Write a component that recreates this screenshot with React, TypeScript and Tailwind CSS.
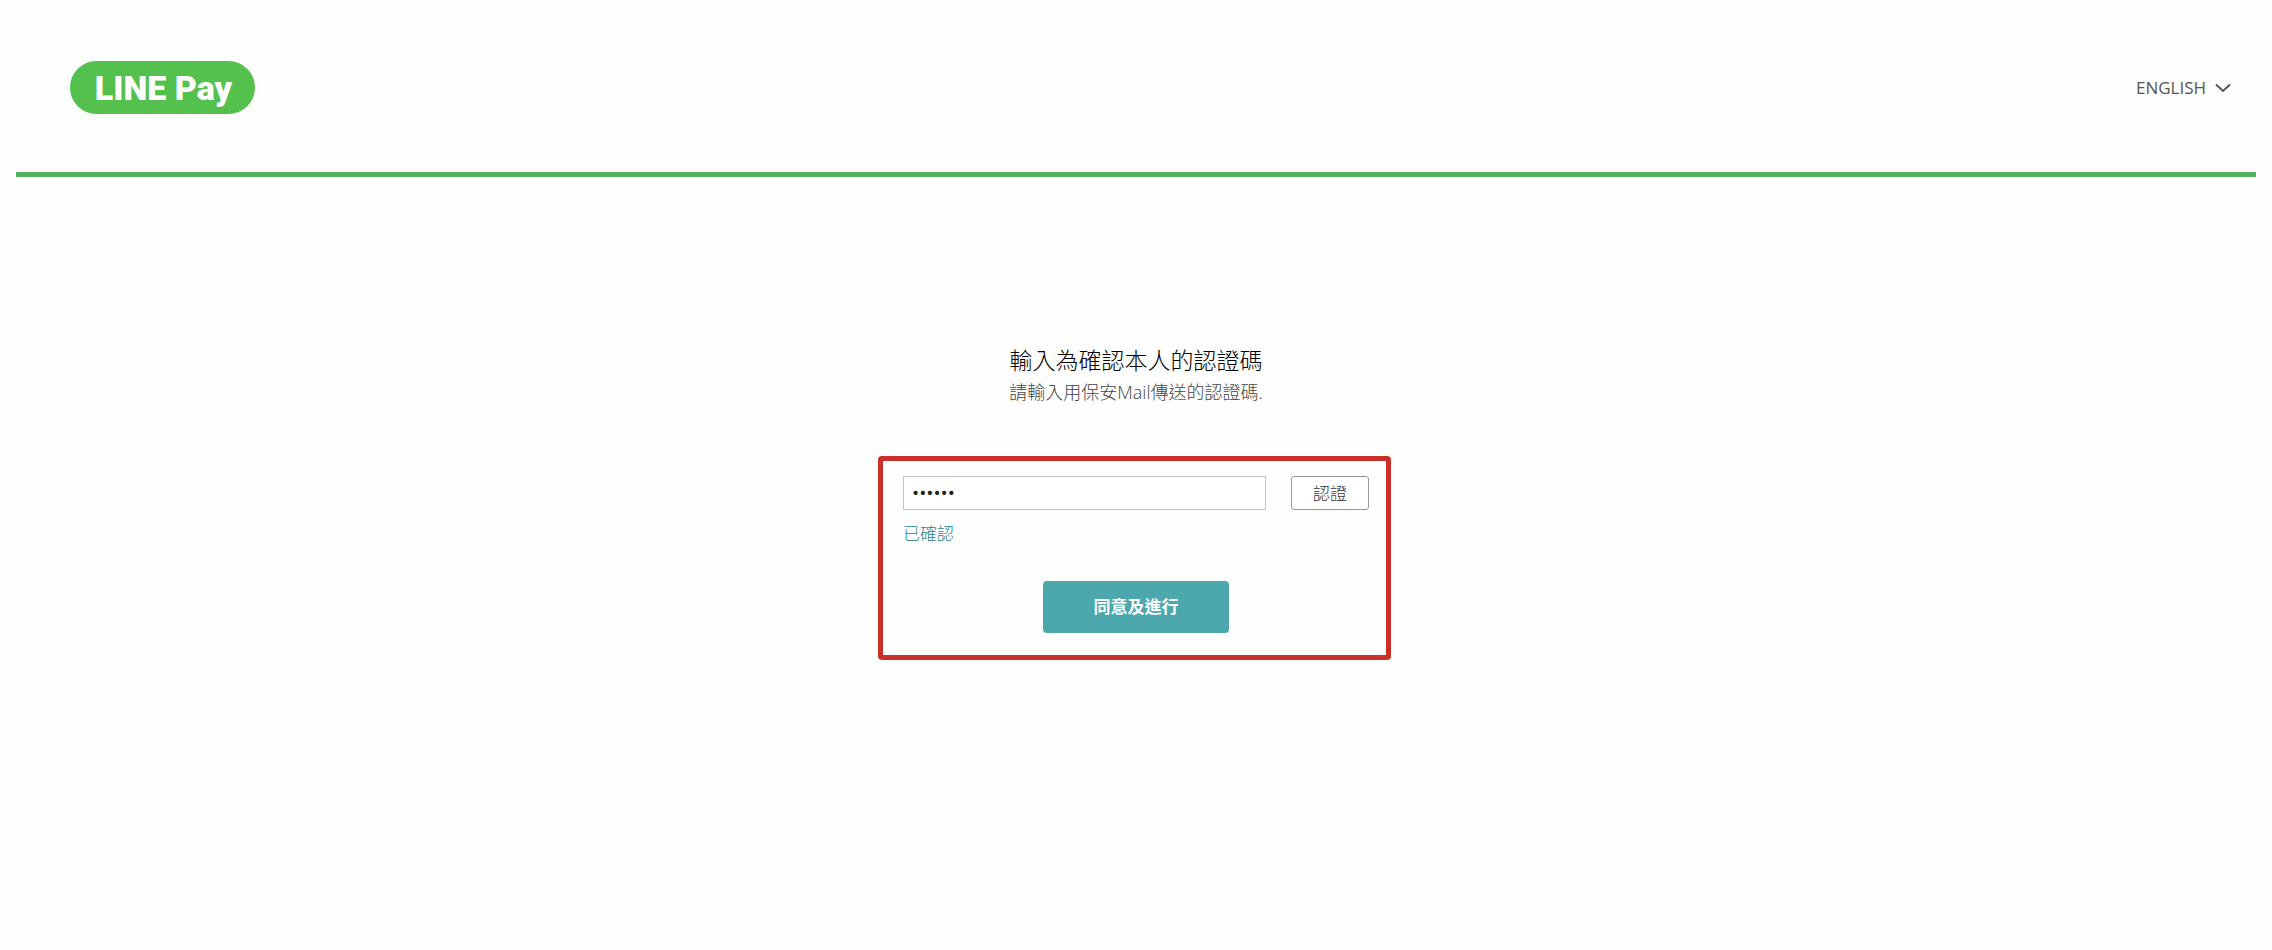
import { useState } from "react";

const LANGUAGES = ["ENGLISH"];

function Logo() {
  return (
    <a
      href="#"
      aria-label="LINE Pay"
      className="flex h-[53px] w-[185px] items-center justify-center rounded-full bg-[#54c04e] pt-px pl-[2px] font-['Roboto',sans-serif] text-[34px] leading-none font-black text-white"
    >
      LINE Pay
    </a>
  );
}

function LanguageSelect() {
  return (
    <div className="relative flex items-center text-[#555]">
      <select
        aria-label="Language"
        className="appearance-none bg-transparent pr-6 text-[17px] leading-6 outline-none"
      >
        {LANGUAGES.map((language) => (
          <option key={language}>{language}</option>
        ))}
      </select>
      <svg
        className="pointer-events-none absolute right-0 h-[10px] w-4"
        viewBox="0 0 16 10"
        fill="none"
        stroke="currentColor"
        strokeWidth="2"
        aria-hidden="true"
      >
        <path d="M1 1.5 8 8l7-6.5" />
      </svg>
    </div>
  );
}

export default function App() {
  const [code, setCode] = useState("000000");

  return (
    <div className="min-h-screen bg-[#fefefe] px-4 font-['Open_Sans','Noto_Sans_CJK_TC',sans-serif]">
      <header className="flex items-center justify-between border-b-[5px] border-[#53b060] pt-[61px] pr-[25px] pb-[58px] pl-[54px]">
        <Logo />
        <LanguageSelect />
      </header>

      <main className="flex flex-col items-center pt-[167px]">
        <h1 className="text-[23px] leading-8 font-light text-black">輸入為確認本人的認證碼</h1>
        <p className="text-[18px] leading-8 font-light text-[#444]">請輸入用保安Mail傳送的認證碼.</p>

        <form
          className="relative mt-[68px] flex w-full max-w-[466px] flex-col"
          onSubmit={(e) => e.preventDefault()}
        >
          <div className="pointer-events-none absolute -top-5 -right-[22px] -bottom-[27px] -left-[25px] rounded-sm border-[5px] border-[#c93029]" />

          <div className="flex gap-[25px]">
            <input
              type="password"
              aria-label="認證碼"
              value={code}
              onChange={(e) => setCode(e.target.value)}
              className="h-[34px] min-w-0 flex-1 border border-[#c4c4c4] bg-white px-2 text-[19px] text-[#222] outline-none"
            />
            <button
              type="button"
              className="h-[34px] w-[78px] rounded-[3px] border border-[#999] bg-white text-[17px] leading-none font-light text-[#333]"
            >
              認證
            </button>
          </div>
          <p className="mt-3 text-[17px] leading-6 font-light text-[#1f8488]">已確認</p>

          <button
            type="submit"
            className="mt-[35px] h-[52px] w-[186px] self-center rounded bg-[#4ca8ad] pb-[2px] text-[17px] leading-none font-bold text-white"
          >
            同意及進行
          </button>
        </form>
      </main>
    </div>
  );
}
